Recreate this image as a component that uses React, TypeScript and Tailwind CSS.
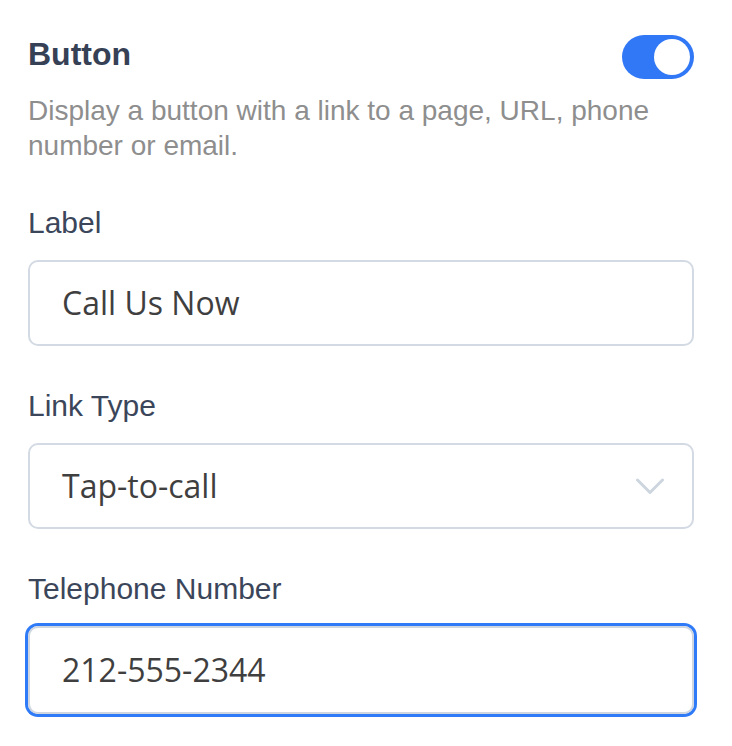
import React from "react";

const labelFont = { fontFamily: '"Liberation Sans", Arial, sans-serif' };
const inputFont = { fontFamily: '"Open Sans", "Noto Sans", sans-serif' };

const FieldLabel = ({ children }: { children: React.ReactNode }) => (
  <div className="text-[30px] leading-[36px] text-[#3b465a]" style={labelFont}>
    {children}
  </div>
);

const App = () => {
  return (
    <div className="bg-white min-h-screen w-[732px]">
      <div className="w-[666px] ml-[28px] pt-[34px]">
        {/* Header with toggle */}
        <div className="flex justify-between items-start">
          <h1 className="text-[32px] leading-[40px] font-bold text-[#364156]" style={labelFont}>
            Button
          </h1>
          <div className="mt-[1px] w-[72px] h-[44px] rounded-full bg-[#3178f6] flex items-center justify-end pr-[4px]">
            <div className="w-[36px] h-[36px] rounded-full bg-white" />
          </div>
        </div>
        <p className="mt-[14px] text-[28px] leading-[35px] text-[#8e8e8e]" style={labelFont}>
          Display a button with a link to a page, URL, phone number or email.
        </p>

        {/* Label */}
        <div className="mt-[42px]">
          <FieldLabel>Label</FieldLabel>
          <div className="mt-[19px] h-[86px] rounded-[10px] border-2 border-[#d3dae3] flex items-center pl-[32px]">
            <span className="text-[32px] text-[#3f3f3f]" style={inputFont}>
              Call Us Now
            </span>
          </div>
        </div>

        {/* Link Type */}
        <div className="mt-[42px]">
          <FieldLabel>Link Type</FieldLabel>
          <div className="mt-[19px] h-[86px] rounded-[10px] border-2 border-[#d3dae3] flex items-center justify-between pl-[32px] pr-[28px]">
            <span className="text-[32px] text-[#3f3f3f]" style={inputFont}>
              Tap-to-call
            </span>
            <svg width="28" height="17" viewBox="0 0 28 17" fill="none">
              <polyline
                points="1.5,2 14,14.5 26.5,2"
                stroke="#cdd5df"
                strokeWidth="3"
                strokeLinecap="round"
                strokeLinejoin="round"
              />
            </svg>
          </div>
        </div>

        {/* Telephone Number */}
        <div className="mt-[42px]">
          <FieldLabel>Telephone Number</FieldLabel>
          <div className="mt-[19px] h-[88px] rounded-[10px] border-2 border-[#cfd6df] ring-[3px] ring-[#2f7af7] flex items-center pl-[32px]">
            <span className="text-[32px] text-[#3f3f3f]" style={inputFont}>
              212-555-2344
            </span>
          </div>
        </div>
      </div>
    </div>
  );
};

export default App;
